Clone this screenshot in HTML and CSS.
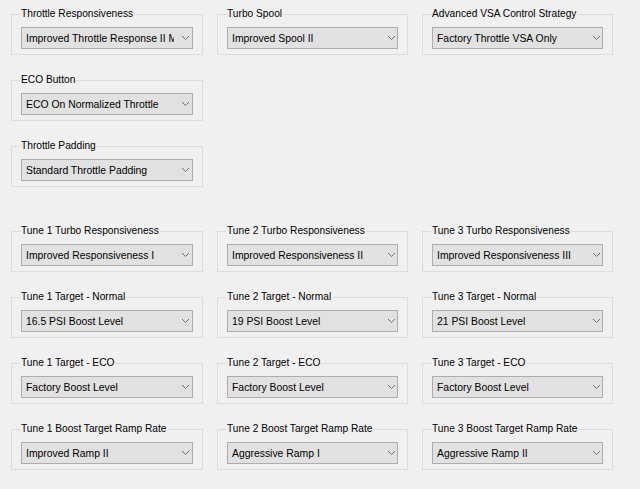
FILE: index.html
```html
<!DOCTYPE html>
<html>
<head>
<meta charset="utf-8">
<link rel="stylesheet" href="styles.css">
</head>
<body>
<div class="page">
  <div class="grid top">
    <fieldset class="grp"><legend>Throttle Responsiveness</legend><div class="combo"><span class="val">Improved Throttle Response II Mode</span><svg class="chev" width="9" height="6" viewBox="0 0 9 6"><polyline points="1,1 4.5,4.5 8,1" fill="none" stroke="#707070" stroke-width="1"/></svg></div></fieldset>
    <fieldset class="grp"><legend>Turbo Spool</legend><div class="combo"><span class="val">Improved Spool II</span><svg class="chev" width="9" height="6" viewBox="0 0 9 6"><polyline points="1,1 4.5,4.5 8,1" fill="none" stroke="#707070" stroke-width="1"/></svg></div></fieldset>
    <fieldset class="grp"><legend>Advanced VSA Control Strategy</legend><div class="combo"><span class="val">Factory Throttle VSA Only</span><svg class="chev" width="9" height="6" viewBox="0 0 9 6"><polyline points="1,1 4.5,4.5 8,1" fill="none" stroke="#707070" stroke-width="1"/></svg></div></fieldset>
    <fieldset class="grp c1"><legend>ECO Button</legend><div class="combo"><span class="val">ECO On Normalized Throttle</span><svg class="chev" width="9" height="6" viewBox="0 0 9 6"><polyline points="1,1 4.5,4.5 8,1" fill="none" stroke="#707070" stroke-width="1"/></svg></div></fieldset>
    <fieldset class="grp c1"><legend>Throttle Padding</legend><div class="combo"><span class="val">Standard Throttle Padding</span><svg class="chev" width="9" height="6" viewBox="0 0 9 6"><polyline points="1,1 4.5,4.5 8,1" fill="none" stroke="#707070" stroke-width="1"/></svg></div></fieldset>
  </div>
  <div class="grid tunes">
    <fieldset class="grp"><legend>Tune 1 Turbo Responsiveness</legend><div class="combo"><span class="val">Improved Responsiveness I</span><svg class="chev" width="9" height="6" viewBox="0 0 9 6"><polyline points="1,1 4.5,4.5 8,1" fill="none" stroke="#707070" stroke-width="1"/></svg></div></fieldset>
    <fieldset class="grp"><legend>Tune 2 Turbo Responsiveness</legend><div class="combo"><span class="val">Improved Responsiveness II</span><svg class="chev" width="9" height="6" viewBox="0 0 9 6"><polyline points="1,1 4.5,4.5 8,1" fill="none" stroke="#707070" stroke-width="1"/></svg></div></fieldset>
    <fieldset class="grp"><legend>Tune 3 Turbo Responsiveness</legend><div class="combo"><span class="val">Improved Responsiveness III</span><svg class="chev" width="9" height="6" viewBox="0 0 9 6"><polyline points="1,1 4.5,4.5 8,1" fill="none" stroke="#707070" stroke-width="1"/></svg></div></fieldset>
    <fieldset class="grp"><legend>Tune 1 Target - Normal</legend><div class="combo"><span class="val">16.5 PSI Boost Level</span><svg class="chev" width="9" height="6" viewBox="0 0 9 6"><polyline points="1,1 4.5,4.5 8,1" fill="none" stroke="#707070" stroke-width="1"/></svg></div></fieldset>
    <fieldset class="grp"><legend>Tune 2 Target - Normal</legend><div class="combo"><span class="val">19 PSI Boost Level</span><svg class="chev" width="9" height="6" viewBox="0 0 9 6"><polyline points="1,1 4.5,4.5 8,1" fill="none" stroke="#707070" stroke-width="1"/></svg></div></fieldset>
    <fieldset class="grp"><legend>Tune 3 Target - Normal</legend><div class="combo"><span class="val">21 PSI Boost Level</span><svg class="chev" width="9" height="6" viewBox="0 0 9 6"><polyline points="1,1 4.5,4.5 8,1" fill="none" stroke="#707070" stroke-width="1"/></svg></div></fieldset>
    <fieldset class="grp"><legend>Tune 1 Target - ECO</legend><div class="combo"><span class="val">Factory Boost Level</span><svg class="chev" width="9" height="6" viewBox="0 0 9 6"><polyline points="1,1 4.5,4.5 8,1" fill="none" stroke="#707070" stroke-width="1"/></svg></div></fieldset>
    <fieldset class="grp"><legend>Tune 2 Target - ECO</legend><div class="combo"><span class="val">Factory Boost Level</span><svg class="chev" width="9" height="6" viewBox="0 0 9 6"><polyline points="1,1 4.5,4.5 8,1" fill="none" stroke="#707070" stroke-width="1"/></svg></div></fieldset>
    <fieldset class="grp"><legend>Tune 3 Target - ECO</legend><div class="combo"><span class="val">Factory Boost Level</span><svg class="chev" width="9" height="6" viewBox="0 0 9 6"><polyline points="1,1 4.5,4.5 8,1" fill="none" stroke="#707070" stroke-width="1"/></svg></div></fieldset>
    <fieldset class="grp"><legend>Tune 1 Boost Target Ramp Rate</legend><div class="combo"><span class="val">Improved Ramp II</span><svg class="chev" width="9" height="6" viewBox="0 0 9 6"><polyline points="1,1 4.5,4.5 8,1" fill="none" stroke="#707070" stroke-width="1"/></svg></div></fieldset>
    <fieldset class="grp"><legend>Tune 2 Boost Target Ramp Rate</legend><div class="combo"><span class="val">Aggressive Ramp I</span><svg class="chev" width="9" height="6" viewBox="0 0 9 6"><polyline points="1,1 4.5,4.5 8,1" fill="none" stroke="#707070" stroke-width="1"/></svg></div></fieldset>
    <fieldset class="grp"><legend>Tune 3 Boost Target Ramp Rate</legend><div class="combo"><span class="val">Aggressive Ramp II</span><svg class="chev" width="9" height="6" viewBox="0 0 9 6"><polyline points="1,1 4.5,4.5 8,1" fill="none" stroke="#707070" stroke-width="1"/></svg></div></fieldset>
  </div>
</div>
</body>
</html>
```
FILE: styles.css
```css
html, body {
  margin: 0;
  padding: 0;
  background: #f0f0f0;
}
body {
  font-family: "Liberation Sans", Arial, sans-serif;
  font-size: 10.4px;
  color: #000;
  width: 640px;
  height: 489px;
  overflow: hidden;
}
.page {
  padding: 8px 0 0 11px;
}
.grid {
  display: grid;
  grid-template-columns: 192px 191px 191px;
  column-gap: 14px;
  row-gap: 19px;
}
.tunes {
  margin-top: 38px;
}
.c1 {
  grid-column: 1;
}
.grp {
  box-sizing: border-box;
  margin: 0;
  min-width: 0;
  border: 1px solid #dcdcdc;
  padding: 7px 9px 5px 9px;
  height: 47px;
}
.grp legend {
  font-size: 10.2px;
  line-height: 12px;
  height: 12px;
  padding: 0 1px;
  margin-left: -1px;
  color: #000;
}
.combo {
  box-sizing: border-box;
  height: 22px;
  background: #e1e1e1;
  border: 1px solid #adadad;
  display: flex;
  align-items: center;
  padding-left: 4px;
}
.val {
  width: 148px;
  overflow: hidden;
  white-space: nowrap;
  flex: none;
}
.chev {
  margin-left: 7px;
  flex: none;
}
```
